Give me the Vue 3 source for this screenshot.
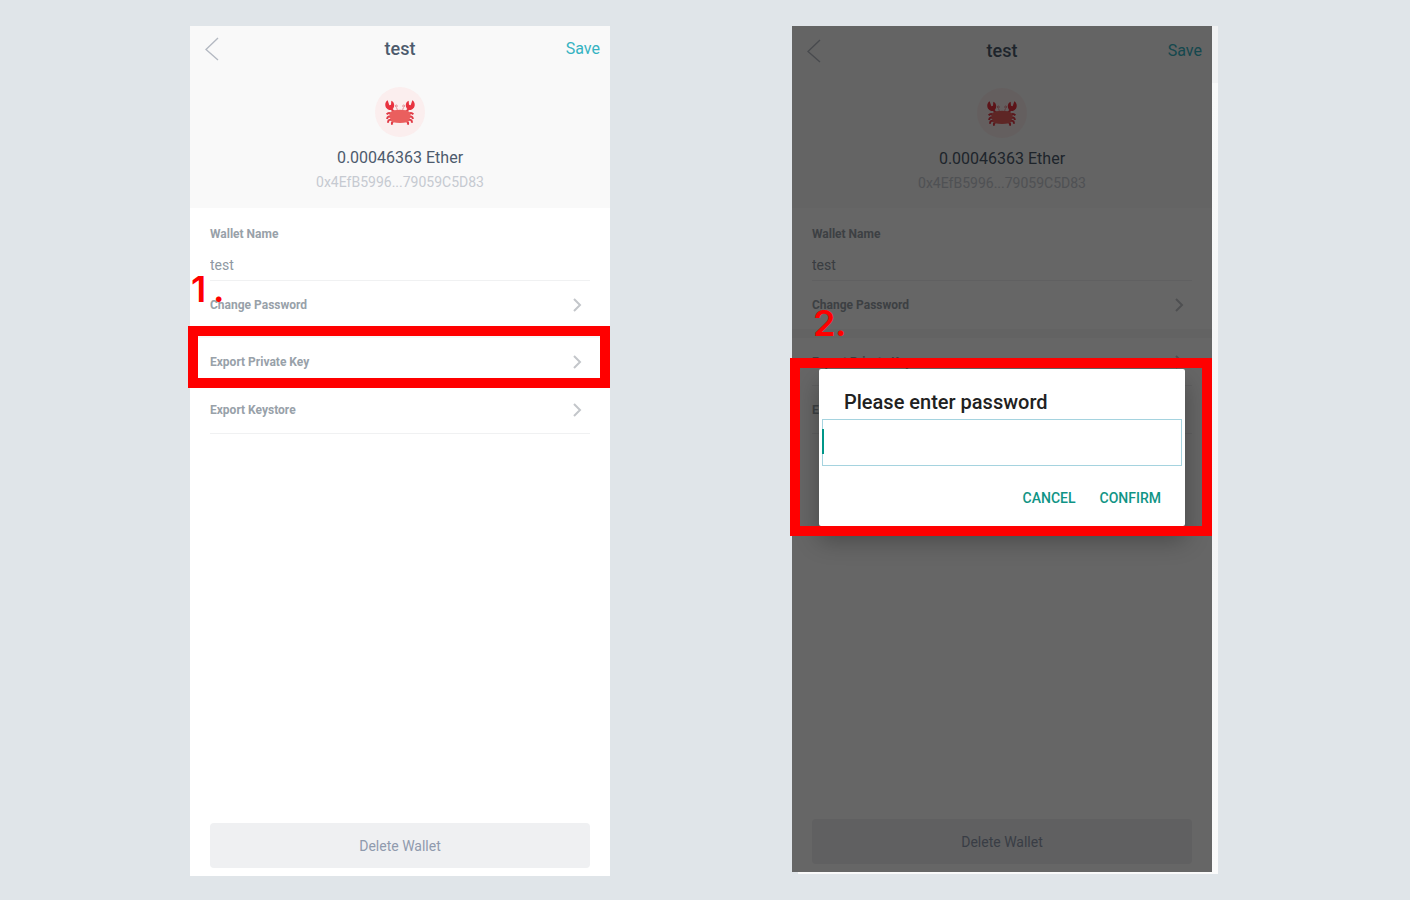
<script setup>
const screens = [
  { id: 'export', step: 1, dialog: false },
  { id: 'confirm', step: 2, dialog: true },
]
const exportRows = ['Export Private Key', 'Export Keystore']
</script>

<template>
  <main class="page">
    <section
      v-for="screen in screens"
      :key="screen.id"
      class="phone"
      :class="{ dimmed: screen.dialog }"
    >
      <div class="screen">
        <header class="summary">
          <nav class="bar">
            <button class="back" type="button" aria-label="Back">
              <svg width="14" height="24" viewBox="0 0 14 24">
                <path d="M13 1 1 12.500 13 23" />
              </svg>
            </button>
            <h1>test</h1>
            <button class="save" type="button">Save</button>
          </nav>
          <div class="avatar">
            <svg width="30" height="25" viewBox="0 0 90 75">
              <g class="limbs">
                <path d="M17 25 31 39M73 25 59 39" />
                <path d="M20 43Q12 35 5 43M18 52Q9 45 6 57M22 60Q9 56 9 68M26 64Q18 66 22 74" />
                <path d="M70 43Q78 35 85 43M72 52Q81 45 84 57M68 60Q81 56 81 68M64 64Q72 66 68 74" />
              </g>
              <path class="claw" d="M8 1C-1 6 -1 19 5 25C10 32 20 32 25 25C30 18 28 5 19 2L18 14L13 16Z" />
              <path class="claw" d="M82 1C91 6 91 19 85 25C80 32 70 32 65 25C60 18 62 5 71 2L72 14L77 16Z" />
              <g class="eyes">
                <path d="M35 23 38 34M55 23 52 34" />
                <circle cx="34" cy="18" r="3" />
                <circle cx="56" cy="18" r="3" />
              </g>
              <path class="shell" d="M27 31Q45 28 63 31Q75 34 77 44Q75 61 66 67Q45 71 24 67Q15 61 13 44Q15 34 27 31Z" />
            </svg>
          </div>
          <p class="balance">0.00046363 Ether</p>
          <p class="address">0x4EfB5996...79059C5D83</p>
        </header>

        <div class="field">
          <label :for="`name-${screen.id}`">Wallet Name</label>
          <input :id="`name-${screen.id}`" type="text" value="test" />
        </div>
        <div class="row first">
          <button type="button">
            Change Password
            <svg width="9" height="14" viewBox="0 0 9 14"><path d="M1 1 7 7 1 13" /></svg>
          </button>
          <span v-if="!screen.dialog" class="step"><span>{{ screen.step }}</span>.</span>
        </div>
        <div class="divider"></div>
        <div v-for="(row, i) in exportRows" :key="row" class="row">
          <button type="button">
            {{ row }}
            <svg width="9" height="14" viewBox="0 0 9 14"><path d="M1 1 7 7 1 13" /></svg>
          </button>
          <div v-if="!screen.dialog && i === 0" class="marker"></div>
        </div>
        <button class="delete" type="button">Delete Wallet</button>
      </div>

      <template v-if="screen.dialog">
        <div class="scrim"></div>
        <div class="prompt">
          <form class="dialog" role="dialog" aria-labelledby="prompt-label" @submit.prevent>
            <label id="prompt-label" for="password">Please enter password</label>
            <div class="entry"><input id="password" type="password" /></div>
            <div class="actions">
              <button type="button">CANCEL</button>
              <button type="submit">CONFIRM</button>
            </div>
          </form>
          <span class="step"><span>{{ screen.step }}</span>.</span>
        </div>
      </template>
    </section>
  </main>
</template>

<style>
body {
  background: #e0e5e9;
}
</style>

<style scoped>
* {
  box-sizing: border-box;
}
.page {
  display: grid;
  grid-template-columns: 1fr 1fr;
  gap: 182px;
  min-height: 100vh;
  padding: 26px 198px 24px 190px;
  font-family: Roboto, sans-serif;
}
button {
  padding: 0;
  border: 0;
  background: none;
  font: inherit;
  color: inherit;
}
input {
  border: 0;
  background: none;
  font: inherit;
  color: inherit;
  outline: 0;
}
svg {
  display: block;
  fill: none;
}
.phone {
  position: relative;
  z-index: 0;
  display: flex;
}
.dimmed {
  margin-bottom: 4px;
}
.dimmed::before {
  content: "";
  position: absolute;
  z-index: -1;
  inset: 0 -6px -2px 6px;
  background: linear-gradient(#f1f2f3 57px, #f8f9f9 57px, #f3f4f5 60%, #fafafa);
}
.screen {
  flex: 1;
  display: flex;
  flex-direction: column;
  padding-bottom: 8px;
  background: #fff;
}
.summary {
  display: flex;
  flex-direction: column;
  align-items: center;
  height: 182px;
  background: #f9f9f9;
}
.bar {
  align-self: stretch;
  display: grid;
  grid-template-columns: 1fr auto 1fr;
  align-items: center;
  height: 45px;
  padding: 0 10px 0 15px;
  line-height: 20px;
}
.dimmed .bar {
  height: 49px;
}
.back {
  justify-self: start;
}
.back path {
  stroke: #b4b9c2;
  stroke-width: 1.4;
}
h1 {
  margin: 0;
  padding-right: 5px;
  font-size: 18px;
  font-weight: 500;
  color: #4d5b6d;
}
.save {
  justify-self: end;
  font-size: 16px;
  color: #35b3c2;
}
.avatar {
  display: grid;
  place-items: center;
  width: 50px;
  height: 50px;
  margin-top: 16px;
  border-radius: 50%;
  background: #fbeeee;
}
.dimmed .avatar {
  margin-top: 13px;
}
.limbs path {
  stroke: #e13945;
  stroke-width: 6;
}
.claw {
  fill: #e8323f;
}
.eyes {
  stroke: #d9626b;
  stroke-width: 2;
}
.shell {
  fill: #ea5f5e;
}
p {
  margin: 0;
  line-height: 20px;
}
.balance {
  margin-top: 11px;
  font-size: 16px;
  color: #4d5b6d;
}
.address {
  margin-top: 4px;
  font-size: 14px;
  color: #c6cad1;
}
.field {
  display: flex;
  flex-direction: column;
  height: 73px;
  margin: 0 20px;
  padding-top: 16px;
  border-bottom: 1px solid #f0f1f2;
  color: #8e98a2;
}
.field label {
  font-size: 12px;
  font-weight: 700;
  line-height: 20px;
  color: #98a1a9;
}
.field input {
  width: 100%;
  height: 20px;
  margin-top: 11px;
  padding: 0;
  font-size: 14px;
}
.row {
  position: relative;
  height: 48px;
  padding: 0 20px;
}
.row button {
  display: flex;
  align-items: center;
  justify-content: space-between;
  width: 100%;
  height: 48px;
  padding: 1px 8px 0 0;
  border-bottom: 1px solid #f0f1f2;
  font-size: 12px;
  font-weight: 700;
  color: #98a1a9;
}
.row.first button {
  padding-top: 0;
  border-bottom: 0;
}
.row path {
  stroke: #c3c6ca;
  stroke-width: 2;
}
.divider {
  height: 9px;
  background: #f7f8f8;
}
.delete {
  height: 45px;
  margin: auto 20px 0;
  border-radius: 4px;
  background: #eff0f2;
  font-size: 14px;
  color: #8f9aad;
}
.step {
  position: absolute;
  display: flex;
  font-family: Inter, sans-serif;
  font-size: 36px;
  font-weight: 600;
  line-height: 36px;
  color: #f00;
}
.step span {
  width: 22px;
}
.row .step {
  top: -10px;
  left: 1px;
}
.marker {
  position: absolute;
  z-index: 1;
  inset: -12px 0 -2px -2px;
  border: 10px solid #f00;
}
.scrim {
  position: absolute;
  inset: 0;
  background: rgba(0, 0, 0, 0.6);
}
.prompt {
  position: absolute;
  top: 332px;
  left: -2px;
  right: 0;
  padding: 11px 27px 10px 29px;
}
.prompt::after {
  content: "";
  position: absolute;
  inset: 0;
  border: 10px solid #f00;
}
.prompt .step {
  top: -53px;
  left: 23px;
}
.dialog {
  padding: 21px 3px 16px;
  border-radius: 2px;
  background: #fff;
  box-shadow: 0 14px 24px rgba(0, 0, 0, 0.3);
}
.dialog label {
  display: block;
  padding-left: 22px;
  font-size: 20px;
  font-weight: 500;
  line-height: 24px;
  color: #212121;
}
.entry {
  position: relative;
  margin-top: 5px;
}
.entry::before {
  content: "";
  position: absolute;
  top: 10px;
  left: 0;
  width: 2px;
  height: 25px;
  background: #009688;
}
.entry input {
  display: block;
  width: 100%;
  height: 47px;
  border: 1px solid #a5d3df;
}
.actions {
  display: flex;
  justify-content: flex-end;
  gap: 24px;
  margin-top: 20px;
  padding-right: 21px;
  font-size: 14px;
  font-weight: 500;
  line-height: 24px;
  color: #109485;
}
</style>
